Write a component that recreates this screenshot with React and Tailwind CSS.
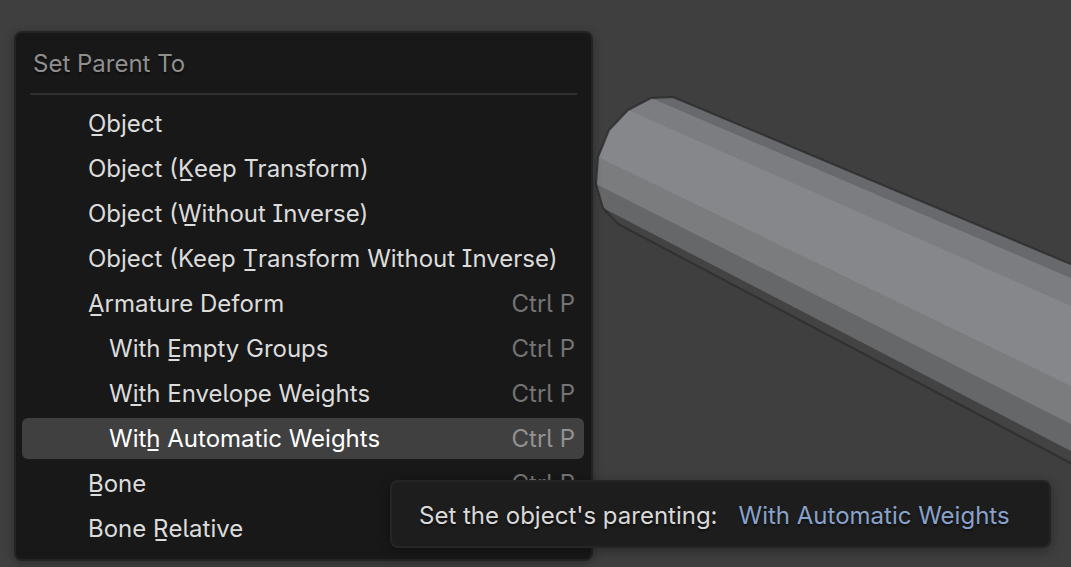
const menuItems = [
  { label: 'Object', key: 0 },
  { label: 'Object (Keep Transform)', key: 8 },
  { label: 'Object (Without Inverse)', key: 8 },
  { label: 'Object (Keep Transform Without Inverse)', key: 13 },
  { label: 'Armature Deform', key: 0, shortcut: 'Ctrl P' },
  { label: 'With Empty Groups', key: 5, shortcut: 'Ctrl P', nested: true },
  { label: 'With Envelope Weights', key: 1, shortcut: 'Ctrl P', nested: true },
  { label: 'With Automatic Weights', key: 3, shortcut: 'Ctrl P', nested: true, active: true },
  { label: 'Bone', key: 0, shortcut: 'Ctrl P' },
  { label: 'Bone Relative', key: 5 },
];

function Mnemonic({ label, index }) {
  return (
    <span className="whitespace-pre">
      {label.slice(0, index)}
      <span className="relative after:absolute after:bottom-[2px] after:left-1/2 after:h-[2px] after:w-[11px] after:-translate-x-1/2 after:bg-current">
        {label[index]}
      </span>
      {label.slice(index + 1)}
    </span>
  );
}

function MenuItem({ item }) {
  return (
    <button
      type="button"
      role="menuitem"
      className={`flex h-[41px] w-full items-center justify-between rounded-md pr-[9px] text-left ${
        item.nested ? 'pl-[87px]' : 'pl-[66px]'
      } ${item.active ? 'bg-[#404040] text-white' : 'text-[#dcdcdc]'}`}
    >
      <Mnemonic label={item.label} index={item.key} />
      {item.shortcut && (
        <span className={item.active ? 'text-[#929292]' : 'text-[#747474]'}>{item.shortcut}</span>
      )}
    </button>
  );
}

// Faceted cylinder in the viewport. Each side is painted down to the bottom
// edge and the next one covers it, so no seams show between them.
function Viewport() {
  return (
    <svg
      className="absolute inset-0 size-full"
      viewBox="0 0 1071 567"
      preserveAspectRatio="xMinYMin slice"
      aria-hidden="true"
    >
      <path d="M673 97 L1071 264 V463 L618 224 L603 208 L596 184 L598 157 L609 130 L628 110 L651 98 Z" fill="#68696d" />
      <path d="M651 98 L1071 278 V463 L618 224 L603 208 L596 184 L598 157 L609 130 L628 110 Z" fill="#7c7d80" />
      <path d="M628 110 L1071 306 V463 L618 224 L603 208 L596 184 L598 157 L609 130 Z" fill="#86878a" />
      <path d="M598 157 L1071 386 V463 L618 224 L603 208 L596 184 Z" fill="#7b7c7e" />
      <path d="M596 184 L1071 424 V463 L618 224 L603 208 Z" fill="#666769" />
      <path d="M603 208 L1071 451 V463 L618 224 Z" fill="#434343" />
      <path
        d="M1080 268 L673 97 L651 98 L628 110 L609 130 L598 157 L596 184 L603 208 L618 224 L1080 468"
        fill="none"
        stroke="#2b2b2b"
        strokeWidth="2"
        strokeLinejoin="round"
        opacity="0.8"
      />
    </svg>
  );
}

export default function App() {
  return (
    <main className="relative min-h-screen overflow-hidden bg-[#3f3f3f] pt-[31px] pb-1 pl-[14px] font-['Inter',sans-serif] text-[24px] leading-[30px] [font-feature-settings:'cv05','cv08'] [text-shadow:0_2px_2px_rgba(0,0,0,0.5)]">
      <Viewport />

      <div
        role="menu"
        aria-label="Set Parent To"
        className="relative w-[579px] max-w-full rounded-lg border-2 border-[#242424] bg-[#181818] pr-[7px] pb-[10px] pl-[6px] shadow-[0_2px_10px_rgba(0,0,0,0.3)]"
      >
        <h1 className="px-[11px] pt-4 pb-[14px] text-[#8f8f8f]">Set Parent To</h1>
        <hr className="mr-[7px] mb-2 ml-2 border-t-2 border-[#2f2f2f]" />
        <div className="flex flex-col gap-1">
          {menuItems.map((item) => (
            <MenuItem key={item.label} item={item} />
          ))}
        </div>
      </div>

      {/* Tooltip over the menu */}
      <div
        role="tooltip"
        className="absolute top-[480px] left-[390px] flex h-[68px] w-[661px] items-center gap-[21px] rounded-lg border-2 border-[#252525] bg-[#1d1d1d] pt-1 pl-[27px] whitespace-nowrap text-[#d9d9d9] shadow-[0_3px_12px_rgba(0,0,0,0.35)]"
      >
        <span>Set the object's parenting:</span>
        <span className="text-[#89a2cb]">With Automatic Weights</span>
      </div>
    </main>
  );
}
